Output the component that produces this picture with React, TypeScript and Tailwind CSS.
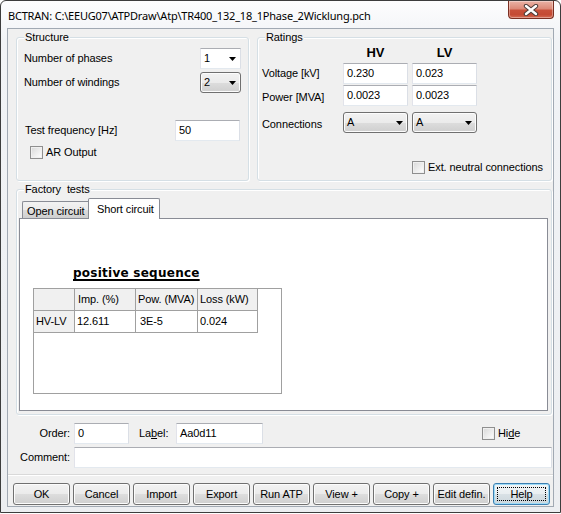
import React from "react";

function TextBox({ cls, value }: { cls: string; value?: string }) {
  return (
    <div
      className={`h-[21px] bg-white border border-t-[#abadb3] border-l-[#e2e3ea] border-r-[#dbdfe6] border-b-[#e3e9ef] flex items-center pl-[3px] shrink-0 ${cls}`}
    >
      {value}
    </div>
  );
}

function Arrow() {
  return (
    <svg width="7" height="4" viewBox="0 0 7 4" className="shrink-0">
      <path d="M0 0H7L3.5 4Z" fill="#000" />
    </svg>
  );
}

function WhiteCombo({ cls, value }: { cls: string; value: string }) {
  return (
    <div
      className={`h-[21px] bg-white border border-t-[#abadb3] border-l-[#e2e3ea] border-r-[#dbdfe6] border-b-[#e3e9ef] flex items-center justify-between pl-[3px] pr-[4px] shrink-0 ${cls}`}
    >
      <span>{value}</span>
      <Arrow />
    </div>
  );
}

function BtnCombo({ cls, value }: { cls: string; value: string }) {
  return (
    <div
      className={`h-[21px] border border-[#707070] rounded-[3px] bg-[linear-gradient(to_bottom,#f2f2f2_0%,#ebebeb_50%,#dddddd_50%,#cfcfcf_100%)] shadow-[inset_0_0_0_1px_#fcfcfc] flex items-center justify-between pl-[3px] pr-[4px] shrink-0 ${cls}`}
    >
      <span>{value}</span>
      <Arrow />
    </div>
  );
}

function Check({ cls }: { cls?: string }) {
  return (
    <div
      className={`w-[13px] h-[13px] border border-[#8f8f8f] bg-[linear-gradient(135deg,#d8d8d8_0%,#f4f4f4_70%,#ffffff_100%)] shadow-[inset_0_0_0_1px_#f0f0f0] shrink-0 ${cls ?? ""}`}
    />
  );
}

function Group({
  title,
  cls,
  children,
}: {
  title: string;
  cls: string;
  children?: React.ReactNode;
}) {
  return (
    <div
      className={`relative border border-[#d5dfe5] rounded-[3px] shadow-[inset_1px_1px_0_#ffffff,1px_1px_0_#ffffff] shrink-0 ${cls}`}
    >
      <span className="absolute left-[7px] top-[-7px] px-[1px] bg-[#f0f0f0] leading-[13px] whitespace-pre">
        {title}
      </span>
      {children}
    </div>
  );
}

function Btn({ label, focus }: { label: string; focus?: boolean }) {
  if (focus) {
    return (
      <div className="relative w-[57px] h-[22px] border border-[#3c7fb1] rounded-[3px] bg-[linear-gradient(to_bottom,#f2f5f7_0%,#e9eef1_50%,#d9e1e6_50%,#ccd6dc_100%)] shadow-[inset_0_0_0_1px_#9fdcf8] flex items-center justify-center">
        <span className="absolute left-[3px] right-[3px] top-[3px] bottom-[3px] border border-dotted border-black" />
        <span>{label}</span>
      </div>
    );
  }
  return (
    <div className="w-[57px] h-[22px] border border-[#707070] rounded-[3px] bg-[linear-gradient(to_bottom,#f2f2f2_0%,#ebebeb_50%,#dddddd_50%,#cfcfcf_100%)] shadow-[inset_0_0_0_1px_#fcfcfc] flex items-center justify-center">
      {label}
    </div>
  );
}

function CloseBtn() {
  return (
    <div className="mr-[6px] w-[46px] h-[18px] border border-t-0 border-[#7a2f22] rounded-b-[4px] bg-[linear-gradient(to_bottom,#eab3a6_0%,#dc8a78_45%,#c8503a_55%,#c44a33_80%,#d56d55_100%)] shadow-[inset_0_0_0_1px_rgba(255,255,255,0.35)] flex items-center justify-center">
      <svg width="16" height="12" viewBox="0 0 16 12">
        <path
          d="M3 2L13 10M13 2L3 10"
          stroke="#4a3b38"
          strokeWidth="4.4"
          strokeLinecap="round"
        />
        <path
          d="M3 2L13 10M13 2L3 10"
          stroke="#ffffff"
          strokeWidth="2.4"
          strokeLinecap="round"
        />
      </svg>
    </div>
  );
}

export default function App() {
  return (
    <div className="w-[561px] h-[514px] bg-white font-['Liberation_Sans',Arial,sans-serif] text-[11px] tracking-[-0.1px] text-black leading-none">
      <div className="w-[561px] h-[513px] flex flex-col border border-[#3d3d3d] rounded-t-[6px] bg-[linear-gradient(to_bottom,#fdfdfe_0px,#f1f3f6_40px,#eceef1_100%)]">
        {/* Title bar */}
        <div className="h-[27px] flex items-start justify-between shrink-0">
          <div className="h-[27px] flex items-center pl-[7px] pt-[1px] font-['Noto_Sans',sans-serif] text-[11px] tracking-[-0.2px] text-black">
            {"BCTRAN: C:\\EEUG07\\ATPDraw\\Atp\\TR400_132_18_1Phase_2Wicklung.pch"}
          </div>
          <CloseBtn />
        </div>

        {/* Client area */}
        <div className="mx-[6px] h-[479px] border border-[#a1a9b3] bg-[#f0f0f0] flex flex-col shrink-0">
          {/* Top groups */}
          <div className="flex mt-[8px] h-[144px] shrink-0">
            <Group title="Structure" cls="ml-[8px] w-[233px] h-[144px]">
              <div className="pl-[7px] flex flex-col">
                <div className="mt-[10px] flex items-center h-[21px]">
                  <span className="w-[176px]">Number of phases</span>
                  <WhiteCombo cls="w-[41px]" value="1" />
                </div>
                <div className="mt-[3px] flex items-center h-[21px]">
                  <span className="w-[176px]">Number of windings</span>
                  <BtnCombo cls="w-[41px]" value="2" />
                </div>
                <div className="mt-[27px] flex items-center h-[21px]">
                  <span className="w-[151px] pl-[1px]">Test frequency [Hz]</span>
                  <TextBox cls="w-[65px]" value="50" />
                </div>
                <div className="mt-[5px] flex items-center ml-[6px] h-[13px]">
                  <Check />
                  <span className="ml-[3px]">AR Output</span>
                </div>
              </div>
            </Group>

            <Group title="Ratings" cls="ml-[8px] w-[295px] h-[144px]">
              <div className="pl-[4px] flex flex-col">
                <div className="mt-[6px] h-[16px] flex items-center font-bold text-[13px] tracking-normal">
                  <span className="w-[81px]" />
                  <span className="w-[65px] text-center">HV</span>
                  <span className="w-[4px]" />
                  <span className="w-[65px] text-center">LV</span>
                </div>
                <div className="mt-[3px] flex items-center h-[21px]">
                  <span className="w-[81px]">Voltage [kV]</span>
                  <TextBox cls="w-[65px]" value="0.230" />
                  <TextBox cls="ml-[4px] w-[65px]" value="0.023" />
                </div>
                <div className="mt-[1px] flex items-center h-[21px]">
                  <span className="w-[81px] mt-[3px]">Power [MVA]</span>
                  <TextBox cls="w-[65px]" value="0.0023" />
                  <TextBox cls="ml-[4px] w-[65px]" value="0.0023" />
                </div>
                <div className="mt-[6px] flex items-center h-[21px]">
                  <span className="w-[81px] mt-[3px]">Connections</span>
                  <BtnCombo cls="w-[65px]" value="A" />
                  <BtnCombo cls="ml-[4px] w-[65px]" value="A" />
                </div>
                <div className="mt-[28px] flex items-center ml-[150px] h-[13px]">
                  <Check />
                  <span className="ml-[3px]">Ext. neutral connections</span>
                </div>
              </div>
            </Group>
          </div>

          {/* Factory tests */}
          <Group title="Factory  tests" cls="mt-[8px] ml-[8px] w-[536px] h-[226px]">
            <div className="ml-[2px] mt-[8px] flex flex-col">
              <div className="h-[20px] flex items-end pl-[3px]">
                <div className="w-[66px] h-[17px] border-l border-t border-[#898c95] rounded-tl-[2px] bg-[linear-gradient(to_bottom,#f2f2f2_0%,#ebebeb_50%,#dddddd_50%,#cfcfcf_100%)] flex items-center pl-[4px] pt-[2px]">
                  Open circuit
                </div>
                <div className="relative z-10 w-[72px] h-[21px] mb-[-1px] border-l border-t border-r border-[#898c95] rounded-t-[2px] bg-white flex items-start pl-[8px] pt-[5px]">
                  Short circuit
                </div>
              </div>
              <div className="w-[529px] h-[193px] border border-[#898c95] bg-white flex flex-col">
                <div className="mt-[47px] ml-[53px] h-[14px] leading-[14px] font-['DejaVu_Sans',Verdana,sans-serif] font-bold text-[12px] tracking-[0.25px] underline underline-offset-[2px] decoration-[1.5px]">
                  positive sequence
                </div>
                <div className="mt-[8px] ml-[13px] w-[249px] h-[106px] border border-[#a0a0a0] bg-white flex flex-col">
                  <div className="flex h-[22px]">
                    <div className="w-[41px] bg-[#f0f0f0] border-r border-b border-[#a0a0a0]" />
                    <div className="w-[61px] bg-[#f0f0f0] border-r border-b border-[#a0a0a0] flex items-center pl-[3px]">
                      Imp. (%)
                    </div>
                    <div className="w-[62px] bg-[#f0f0f0] border-r border-b border-[#a0a0a0] flex items-center pl-[2px]">
                      Pow. (MVA)
                    </div>
                    <div className="w-[60px] bg-[#f0f0f0] border-r border-b border-[#a0a0a0] flex items-center pl-[2px]">
                      Loss (kW)
                    </div>
                  </div>
                  <div className="flex h-[22px]">
                    <div className="w-[41px] bg-[#f0f0f0] border-r border-b border-[#a0a0a0] flex items-center pl-[2px]">
                      HV-LV
                    </div>
                    <div className="w-[61px] border-r border-b border-[#a0a0a0] flex items-center pl-[2px]">
                      12.611
                    </div>
                    <div className="w-[62px] border-r border-b border-[#a0a0a0] flex items-center pl-[4px]">
                      3E-5
                    </div>
                    <div className="w-[60px] border-r border-b border-[#a0a0a0] flex items-center pl-[2px]">
                      0.024
                    </div>
                  </div>
                </div>
              </div>
            </div>
          </Group>

          {/* Order / Label / Hide */}
          <div className="mt-[8px] flex items-center h-[21px] shrink-0">
            <span className="w-[62px] text-right">Order:</span>
            <TextBox cls="ml-[4px] w-[55px]" value="0" />
            <span className="ml-[10px] w-[37px]">
              La<span className="underline">b</span>el:
            </span>
            <TextBox cls="w-[87px]" value="Aa0d11" />
            <Check cls="ml-[219px]" />
            <span className="ml-[3px]">
              Hi<span className="underline">d</span>e
            </span>
          </div>

          {/* Comment */}
          <div className="mt-[3px] flex items-center h-[21px] shrink-0">
            <span className="w-[62px] text-right">Comment:</span>
            <TextBox cls="ml-[4px] w-[478px]" value="" />
          </div>

          {/* Separator */}
          <div className="mt-[6px] h-[2px] border-t border-[#d9d9d9] border-b border-b-white shrink-0" />

          {/* Buttons */}
          <div className="mt-[7px] ml-[5px] flex gap-[3px] shrink-0">
            <Btn label="OK" />
            <Btn label="Cancel" />
            <Btn label="Import" />
            <Btn label="Export" />
            <Btn label="Run ATP" />
            <Btn label="View +" />
            <Btn label="Copy +" />
            <Btn label="Edit defin." />
            <Btn label="Help" focus />
          </div>
        </div>
      </div>
    </div>
  );
}
